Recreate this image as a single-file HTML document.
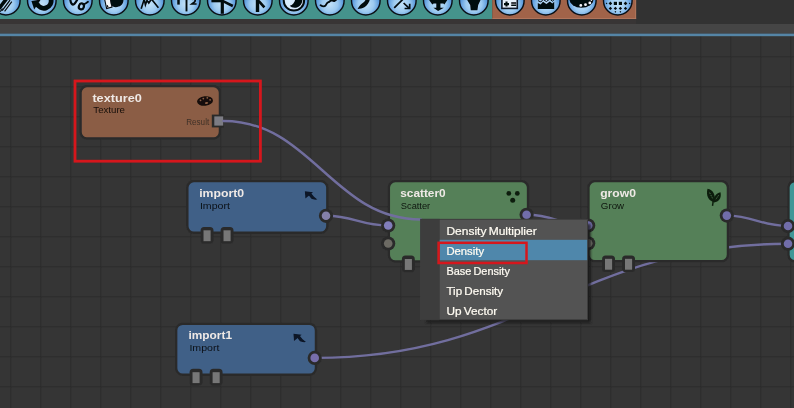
<!DOCTYPE html>
<html><head><meta charset="utf-8"><title>Node Editor</title>
<style>html,body{margin:0;padding:0;background:#343434;overflow:hidden}svg{display:block}text{font-family:"Liberation Sans",sans-serif}.t{font-weight:bold;font-size:11.8px;fill:#efe9e6}.s{font-size:9.3px;fill:#000;fill-opacity:.84}.m{font-size:10.2px;fill:#fffbf2;stroke:#fffbf2;stroke-width:.22px;word-spacing:-0.9px}</style>
</head><body>
<svg width="794" height="408" viewBox="0 0 794 408">
<defs>
<radialGradient id="ball" cx="0.5" cy="0.62" r="0.55"><stop offset="0" stop-color="#c2e2f8"/><stop offset="0.5" stop-color="#9ccaf0"/><stop offset="1" stop-color="#3f86d4"/></radialGradient>
<filter id="soft" x="-5%" y="-5%" width="110%" height="110%"><feGaussianBlur stdDeviation="0.45"/></filter>
<filter id="sh" x="-10%" y="-10%" width="130%" height="130%"><feGaussianBlur stdDeviation="0.9"/></filter>
<filter id="gb" filterUnits="userSpaceOnUse" x="0" y="0" width="794" height="408"><feGaussianBlur stdDeviation="0.45" edgeMode="duplicate"/></filter>
</defs>
<g filter="url(#gb)">
<rect width="794" height="408" fill="#343434"/>
<path d="M10.9 36V408M40.9 36V408M70.9 36V408M100.9 36V408M130.9 36V408M160.9 36V408M190.9 36V408M220.9 36V408M250.9 36V408M280.9 36V408M310.9 36V408M340.9 36V408M370.9 36V408M400.9 36V408M430.9 36V408M460.9 36V408M490.9 36V408M520.9 36V408M550.9 36V408M580.9 36V408M610.9 36V408M640.9 36V408M670.9 36V408M700.9 36V408M730.9 36V408M760.9 36V408M790.9 36V408M0 56.8H794M0 86.8H794M0 116.8H794M0 146.8H794M0 176.8H794M0 206.8H794M0 236.8H794M0 266.8H794M0 296.8H794M0 326.8H794M0 356.8H794M0 386.8H794" stroke="#2d2d2d" stroke-width="1.05" fill="none"/>
<rect x="0" y="0" width="794" height="24" fill="#323232"/><rect x="0" y="19" width="636" height="5" fill="#383636"/>
<rect x="0" y="0" width="492.3" height="19" fill="#45938c"/>
<rect x="492.3" y="0" width="143.8" height="19" fill="#a1644a"/>
<rect x="492.3" y="18.2" width="143.8" height="0.8" fill="#b47a60"/><rect x="635.3" y="0" width="0.8" height="19" fill="#b47a60"/>
<rect x="0" y="24" width="794" height="9.6" fill="#454545"/>
<rect x="0" y="33.6" width="794" height="2.6" fill="#5485a6"/>
<circle cx="5.8" cy="0.7" r="14.3" fill="url(#ball)" stroke="#0a1016" stroke-width="1.4"/>
<circle cx="41.8" cy="0.7" r="14.3" fill="url(#ball)" stroke="#0a1016" stroke-width="1.4"/>
<circle cx="77.8" cy="0.7" r="14.3" fill="url(#ball)" stroke="#0a1016" stroke-width="1.4"/>
<circle cx="113.8" cy="0.7" r="14.3" fill="url(#ball)" stroke="#0a1016" stroke-width="1.4"/>
<circle cx="149.8" cy="0.7" r="14.3" fill="url(#ball)" stroke="#0a1016" stroke-width="1.4"/>
<circle cx="185.8" cy="0.7" r="14.3" fill="url(#ball)" stroke="#0a1016" stroke-width="1.4"/>
<circle cx="221.8" cy="0.7" r="14.3" fill="url(#ball)" stroke="#0a1016" stroke-width="1.4"/>
<circle cx="257.8" cy="0.7" r="14.3" fill="url(#ball)" stroke="#0a1016" stroke-width="1.4"/>
<circle cx="293.8" cy="0.7" r="14.3" fill="url(#ball)" stroke="#0a1016" stroke-width="1.4"/>
<circle cx="329.8" cy="0.7" r="14.3" fill="url(#ball)" stroke="#0a1016" stroke-width="1.4"/>
<circle cx="365.8" cy="0.7" r="14.3" fill="url(#ball)" stroke="#0a1016" stroke-width="1.4"/>
<circle cx="401.8" cy="0.7" r="14.3" fill="url(#ball)" stroke="#0a1016" stroke-width="1.4"/>
<circle cx="437.8" cy="0.7" r="14.3" fill="url(#ball)" stroke="#0a1016" stroke-width="1.4"/>
<circle cx="473.8" cy="0.7" r="14.3" fill="url(#ball)" stroke="#0a1016" stroke-width="1.4"/>
<circle cx="509.8" cy="0.7" r="14.3" fill="url(#ball)" stroke="#0a1016" stroke-width="1.4"/>
<circle cx="545.8" cy="0.7" r="14.3" fill="url(#ball)" stroke="#0a1016" stroke-width="1.4"/>
<circle cx="581.8" cy="0.7" r="14.3" fill="url(#ball)" stroke="#0a1016" stroke-width="1.4"/>
<circle cx="617.8" cy="0.7" r="14.3" fill="url(#ball)" stroke="#0a1016" stroke-width="1.4"/>
<g stroke="#05080c" stroke-linecap="butt" fill="none"><path d="M-1 8.6L6.4 -1" stroke-width="3.6"/><path d="M2.2 10.6L10 0.2" stroke-width="1.3"/><path d="M4.6 11.4L11.8 1.6" stroke-width="1.1"/><path d="M0.2 11.6L2.6 8.6" stroke-width="1.2"/></g>
<path d="M36.8 3.2A7 7 0 0 0 50.8 -1.4" stroke="#05080c" stroke-width="4.8" fill="none"/><path d="M31.4 1L40.8 -0.4L34.2 9.4Z" fill="#05080c"/>
<path d="M70.4 0.4C70.8 3.4 72.4 5.2 73.8 4.4C75.4 3.4 76.2 1.4 77.4 -0.6" stroke="#05080c" stroke-width="2.2" fill="none" stroke-linecap="round"/>
<ellipse cx="81.4" cy="6.4" rx="2.5" ry="3" stroke="#05080c" stroke-width="2.2" fill="none" transform="rotate(20 81.4 6.4)"/><path d="M83.4 4.6C85.2 3.8 86.6 3 88 1.8" stroke="#05080c" stroke-width="1.8" fill="none" stroke-linecap="round"/>
<path d="M104.6 -1L110.6 -1L112 7L106.6 8.6Z" fill="#f4f6f8" stroke="#05080c" stroke-width="1.1"/><path d="M110 -1L123.4 -1C123.8 2.4 122 5.8 118.6 6.6C115.6 7.8 112.2 7 110.8 4.6Z" fill="#05080c"/><path d="M107.2 5.2L108 7.4" stroke="#05080c" stroke-width="1.2"/>
<path d="M141.2 8.8L144.2 -0.8L145.4 4.8L147 0.4L148.8 3L151.4 -1L158.4 7.8" stroke="#05080c" stroke-width="1.6" fill="none" stroke-linejoin="miter"/>
<path d="M186.5 -1V11.4" stroke="#05080c" stroke-width="1.9"/><path d="M178.5 -1V4.6" stroke="#05080c" stroke-width="2.5"/><path d="M191.6 -0.4C193.8 -2.2 196.4 0 194.6 1.8L191.8 4H196.6" stroke="#05080c" stroke-width="1.7" fill="none"/>
<path d="M222.3 -1V13.8" stroke="#05080c" stroke-width="3.2"/><path d="M211.4 0.8H222" stroke="#05080c" stroke-width="3"/><path d="M223 1.2L232.8 6" stroke="#05080c" stroke-width="2.6"/>
<path d="M257.5 -1V12" stroke="#05080c" stroke-width="3.4"/><path d="M258.6 0.8L264.4 7.4" stroke="#05080c" stroke-width="2.6"/>
<circle cx="293.9" cy="0.4" r="10.2" fill="#d8ecfb" stroke="#05080c" stroke-width="2"/><path d="M289.8 5.8C292.6 5 294.6 2.6 295.4 -1L302.4 -1C302.6 4.4 298.8 7.8 294.6 7.8C292.6 7.8 290.8 7 289.8 5.8Z" fill="#05080c"/>
<path d="M320.6 5.2C322.4 6.4 324.6 6.6 325.6 5.4C326.6 4 326.8 2.8 328 2.4C329.4 2 330 1.2 330.6 0.6C331.6 -0.2 333 1.4 334.2 1C335.2 0.6 336 0 336.8 -0.8" stroke="#05080c" stroke-width="1.9" fill="none" stroke-linecap="round"/>
<path d="M357.6 8.9C358.8 7.2 359.8 5.2 361.4 4C363.8 2.4 365.2 1 365.8 -1L370 -1C369.2 2.6 367.2 5.4 364.4 7.2C362.2 8.4 360 8.9 357.6 8.9Z" fill="#05080c"/>
<path d="M394.2 7.8L402.8 -0.6" stroke="#05080c" stroke-width="1.7"/><path d="M403.6 3L408.8 7.8" stroke="#05080c" stroke-width="1.7"/><path d="M404.6 8.5H409.7V3.8" stroke="#05080c" stroke-width="1.7" fill="none"/>
<path d="M428.4 -1L432.3 4.6L433.6 3.4H436.3V7.7H433.4L438.1 11L443.8 7.7H440.4V3.4H443.4L444.4 4.6L447.9 -1Z" fill="#05080c"/>
<path d="M466.6 -1H481L478.2 5L477.4 10.2H470.8L470.2 5Z" fill="#05080c"/>
<rect x="501.9" y="-2" width="15.4" height="10.4" fill="#e6effa" stroke="#0a1428" stroke-width="1.6"/><path d="M504 4.1H509M506.5 1.6V6.6" stroke="#05080c" stroke-width="2.1"/><path d="M511.2 3H516.2M511.2 5.2H516.2" stroke="#05080c" stroke-width="1.5"/>
<path d="M537.8 8.9V3L540.6 4.4L543 1.8L546.4 4L549.8 1.4L552.4 3.6L554.2 1.8V8.9Z" fill="#05080c"/><path d="M538 0.6L540.8 2L543.2 -0.6L546.4 1.6L549.8 -1L552.4 1.2L554.4 -0.6" stroke="#05080c" stroke-width="1" fill="none"/>
<ellipse cx="581.5" cy="-1" rx="12" ry="8.8" fill="#05080c"/><circle cx="580.8" cy="5.4" r="1.4" fill="#f4f6fa"/><circle cx="585.5" cy="4.7" r="1.4" fill="#f4f6fa"/><circle cx="589.8" cy="2.9" r="1.4" fill="#f4f6fa"/><circle cx="591.4" cy="0.3" r="0.8" fill="#f4f6fa"/>
<g fill="#05080c"><path d="M608.6 3.4L610.4 1.5999999999999999L612.1999999999999 3.4L610.4 5.2Z"/><path d="M623.7 3.4L625.5 1.5999999999999999L627.3 3.4L625.5 5.2Z"/><rect x="613.8" y="1.8" width="3.2" height="3.2"/><rect x="618.8" y="1.8" width="3.2" height="3.2"/><path d="M605.8000000000001 3.4L606.6 2.5999999999999996L607.4 3.4L606.6 4.2Z"/><path d="M628.9000000000001 3.4L629.7 2.5999999999999996L630.5 3.4L629.7 4.2Z"/><path d="M608.6999999999999 8.4L610.4 6.7L612.1 8.4L610.4 10.1Z"/><path d="M613.6999999999999 8.4L615.4 6.7L617.1 8.4L615.4 10.1Z"/><path d="M618.6999999999999 8.4L620.4 6.7L622.1 8.4L620.4 10.1Z"/><path d="M623.8 8.4L625.5 6.7L627.2 8.4L625.5 10.1Z"/><path d="M614.5 11.8L615.4 10.9L616.3 11.8L615.4 12.700000000000001Z"/><path d="M619.5 11.8L620.4 10.9L621.3 11.8L620.4 12.700000000000001Z"/></g>
<path d="M314.7 357.9C525.3 357.9 577.4 243.8 788 243.8" stroke="#716e9e" stroke-width="2.4" fill="none" stroke-linecap="round"/>
<path d="M326 215.8C353.6 215.8 360.4 225.5 388 225.5" stroke="#716e9e" stroke-width="2.4" fill="none" stroke-linecap="round"/>
<path d="M526.6 214.8C553.9 214.8 560.7 225.5 588 225.5" stroke="#716e9e" stroke-width="2.4" fill="none" stroke-linecap="round"/>
<path d="M726.5 215.6C753.9 215.6 760.6 226 788 226" stroke="#716e9e" stroke-width="2.4" fill="none" stroke-linecap="round"/>
<rect x="80.6" y="86.2" width="139.3" height="52.2" rx="6.4" fill="#8b5d44" stroke="#2a2a2a" stroke-width="2.3"/>
<text class="t" x="92.4" y="101.7" textLength="49.4" lengthAdjust="spacingAndGlyphs">texture0</text>
<text class="s" x="93.3" y="113.4" textLength="31.7" lengthAdjust="spacingAndGlyphs">Texture</text>
<text x="186.2" y="124.9" font-size="9" fill="#3f3028" textLength="23" lengthAdjust="spacingAndGlyphs">Result</text>
<rect x="211.8" y="114.6" width="12.2" height="12.8" fill="#2a2a2a"/><rect x="214.3" y="116.4" width="8.9" height="9.2" fill="#7c7c84"/>
<g transform="rotate(-6 205 101)"><ellipse cx="205" cy="101" rx="8" ry="4.8" fill="#170d08"/><circle cx="200.6" cy="100" r="0.9" fill="#8b5d44"/><circle cx="203.6" cy="98.4" r="0.9" fill="#8b5d44"/><circle cx="207.6" cy="98.2" r="0.9" fill="#8b5d44"/><circle cx="210.2" cy="100.4" r="0.9" fill="#8b5d44"/><ellipse cx="206.4" cy="103.2" rx="1.6" ry="1" fill="#8b5d44"/></g>
<rect x="187.4" y="181.2" width="139.9" height="51.5" rx="6.4" fill="#406087" stroke="#2a2a2a" stroke-width="2.3"/>
<text class="t" x="199.2" y="196.9" textLength="44.9" lengthAdjust="spacingAndGlyphs">import0</text>
<text class="s" x="199.9" y="208.6" textLength="30" lengthAdjust="spacingAndGlyphs">Import</text>
<rect x="200.6" y="226.9" width="12.9" height="16.6" rx="3.6" fill="#2a2a2a"/>
<rect x="203.5" y="230.3" width="7.1" height="10.9" fill="#777777"/>
<rect x="220.6" y="226.9" width="12.9" height="16.6" rx="3.6" fill="#2a2a2a"/>
<rect x="223.5" y="230.3" width="7.1" height="10.9" fill="#777777"/>
<circle cx="326" cy="215.8" r="7.1" fill="#2a2a2a"/><circle cx="326" cy="215.8" r="4.3" fill="#8480a8"/>
<g transform="translate(0 0)" fill="#0b1526"><path d="M304.9 191.2L313 192.2L305.4 198.4Z"/><path d="M308 194.2L310.6 192.6C312.6 195.6 314.8 197.8 317.4 199.6C315 200 312.6 199.6 311.2 198.6Z"/></g>
<rect x="176.2" y="323.8" width="139.7" height="50.8" rx="6.4" fill="#406087" stroke="#2a2a2a" stroke-width="2.3"/>
<text class="t" x="188.5" y="339.2" textLength="43.5" lengthAdjust="spacingAndGlyphs">import1</text>
<text class="s" x="189.4" y="350.9" textLength="30" lengthAdjust="spacingAndGlyphs">Import</text>
<rect x="189.6" y="368.8" width="12.9" height="16.6" rx="3.6" fill="#2a2a2a"/>
<rect x="192.5" y="372.2" width="7.1" height="10.9" fill="#777777"/>
<rect x="209.7" y="368.8" width="12.9" height="16.6" rx="3.6" fill="#2a2a2a"/>
<rect x="212.6" y="372.2" width="7.1" height="10.9" fill="#777777"/>
<circle cx="314.7" cy="357.9" r="7.1" fill="#2a2a2a"/><circle cx="314.7" cy="357.9" r="4.3" fill="#776eab"/>
<g transform="translate(-11.4 142.5)" fill="#0b1526"><path d="M304.9 191.2L313 192.2L305.4 198.4Z"/><path d="M308 194.2L310.6 192.6C312.6 195.6 314.8 197.8 317.4 199.6C315 200 312.6 199.6 311.2 198.6Z"/></g>
<rect x="388.9" y="181.2" width="139.1" height="80.2" rx="6.4" fill="#558058" stroke="#2a2a2a" stroke-width="2.3"/>
<text class="t" x="400.2" y="196.9" textLength="45.5" lengthAdjust="spacingAndGlyphs">scatter0</text>
<text class="s" x="400.8" y="208.6" textLength="29.4" lengthAdjust="spacingAndGlyphs">Scatter</text>
<rect x="401.9" y="255.6" width="12.9" height="16.6" rx="3.6" fill="#2a2a2a"/>
<rect x="404.8" y="259.0" width="7.1" height="10.9" fill="#777777"/>
<rect x="421.9" y="255.6" width="12.9" height="16.6" rx="3.6" fill="#2a2a2a"/>
<rect x="424.8" y="259.0" width="7.1" height="10.9" fill="#777777"/>
<circle cx="388.2" cy="225.5" r="7.1" fill="#2a2a2a"/><circle cx="388.2" cy="225.5" r="4.3" fill="#817ebb"/>
<circle cx="388.2" cy="243.5" r="7.1" fill="#2a2a2a"/><circle cx="388.2" cy="243.5" r="4.3" fill="#6c6b64"/>
<circle cx="526.6" cy="214.8" r="7.1" fill="#2a2a2a"/><circle cx="526.6" cy="214.8" r="4.3" fill="#716daa"/>
<circle cx="508.8" cy="193.4" r="2.4" fill="#0e1f0e"/><circle cx="517.3" cy="193.4" r="2.4" fill="#0e1f0e"/><circle cx="512.7" cy="200.3" r="2.5" fill="#0e1f0e"/>
<rect x="588.5" y="181.2" width="139.4" height="80.0" rx="6.4" fill="#558058" stroke="#2a2a2a" stroke-width="2.3"/>
<text class="t" x="600.2" y="196.7" textLength="35.7" lengthAdjust="spacingAndGlyphs">grow0</text>
<text class="s" x="600.8" y="208.6" textLength="23.3" lengthAdjust="spacingAndGlyphs">Grow</text>
<rect x="602.1" y="255.4" width="12.9" height="16.6" rx="3.6" fill="#2a2a2a"/>
<rect x="605.0" y="258.8" width="7.1" height="10.9" fill="#777777"/>
<rect x="622.1" y="255.4" width="12.9" height="16.6" rx="3.6" fill="#2a2a2a"/>
<rect x="625.0" y="258.8" width="7.1" height="10.9" fill="#777777"/>
<circle cx="588.2" cy="225.5" r="7.1" fill="#2a2a2a"/><circle cx="588.2" cy="225.5" r="4.3" fill="#716daa"/>
<circle cx="588.2" cy="243.3" r="7.1" fill="#2a2a2a"/><circle cx="588.2" cy="243.3" r="4.3" fill="#6c6b64"/>
<circle cx="726.8" cy="215.6" r="7.1" fill="#2a2a2a"/><circle cx="726.8" cy="215.6" r="4.3" fill="#716daa"/>
<g fill="#0a1e0b"><path d="M707.5 188.8C713.2 189.8 716 195 714.2 202.2C708.4 201 705.8 195.6 707.5 188.8Z"/><path d="M720.5 192.3C721.8 198.2 718.8 201.8 714 202.6C712.8 197 716 193.4 720.5 192.3Z"/><path d="M713 197L714.6 197.2L713.2 206L711.8 205.7Z"/></g><path d="M709.6 192.6L712.6 198.4M718.6 195.2L715.6 199.8" stroke="#86b088" stroke-width="0.7" stroke-dasharray="1.6 1" opacity="0.75"/>
<rect x="788.5" y="181.0" width="112.9" height="80.2" rx="6.4" fill="#3f9797" stroke="#2a2a2a" stroke-width="2.3"/>
<circle cx="788" cy="226" r="7.1" fill="#2a2a2a"/><circle cx="788" cy="226" r="4.3" fill="#716daa"/>
<circle cx="788" cy="243.7" r="7.1" fill="#2a2a2a"/><circle cx="788" cy="243.7" r="4.3" fill="#716daa"/>
<path d="M223.5 121C311.4 121 333.1 219.5 421 219.5" stroke="#716e9e" stroke-width="2.4" fill="none" stroke-linecap="round"/>
<rect x="75" y="81" width="185.4" height="80.2" fill="none" stroke="#d6191d" stroke-width="2.8"/>
<rect x="426" y="224" width="164.8" height="98.6" fill="#181818" opacity="0.75" filter="url(#sh)"/>
<rect x="420.4" y="218.9" width="167.6" height="101.2" fill="#525252"/>
<rect x="420.4" y="218.9" width="19.3" height="101.2" fill="#3e3e3e"/>
<rect x="439.7" y="239.8" width="148.3" height="20.4" fill="#4f87ab"/>
<rect x="420.9" y="219.4" width="166.6" height="100.2" fill="none" stroke="#3a3a3a" stroke-width="1" opacity="0.8"/>
<text class="m" x="446.4" y="234.5" textLength="90.3" lengthAdjust="spacingAndGlyphs">Density Multiplier</text>
<text class="m" x="446.4" y="254.5" textLength="37.7" lengthAdjust="spacingAndGlyphs">Density</text>
<text class="m" x="446.4" y="274.5" textLength="63.5" lengthAdjust="spacingAndGlyphs">Base Density</text>
<text class="m" x="446.4" y="294.5" textLength="56.7" lengthAdjust="spacingAndGlyphs">Tip Density</text>
<text class="m" x="446.4" y="314.5" textLength="50.8" lengthAdjust="spacingAndGlyphs">Up Vector</text>
<rect x="438.6" y="242.8" width="87.9" height="20.2" fill="none" stroke="#d6191d" stroke-width="2.5"/>
</g>
</svg></body></html>
